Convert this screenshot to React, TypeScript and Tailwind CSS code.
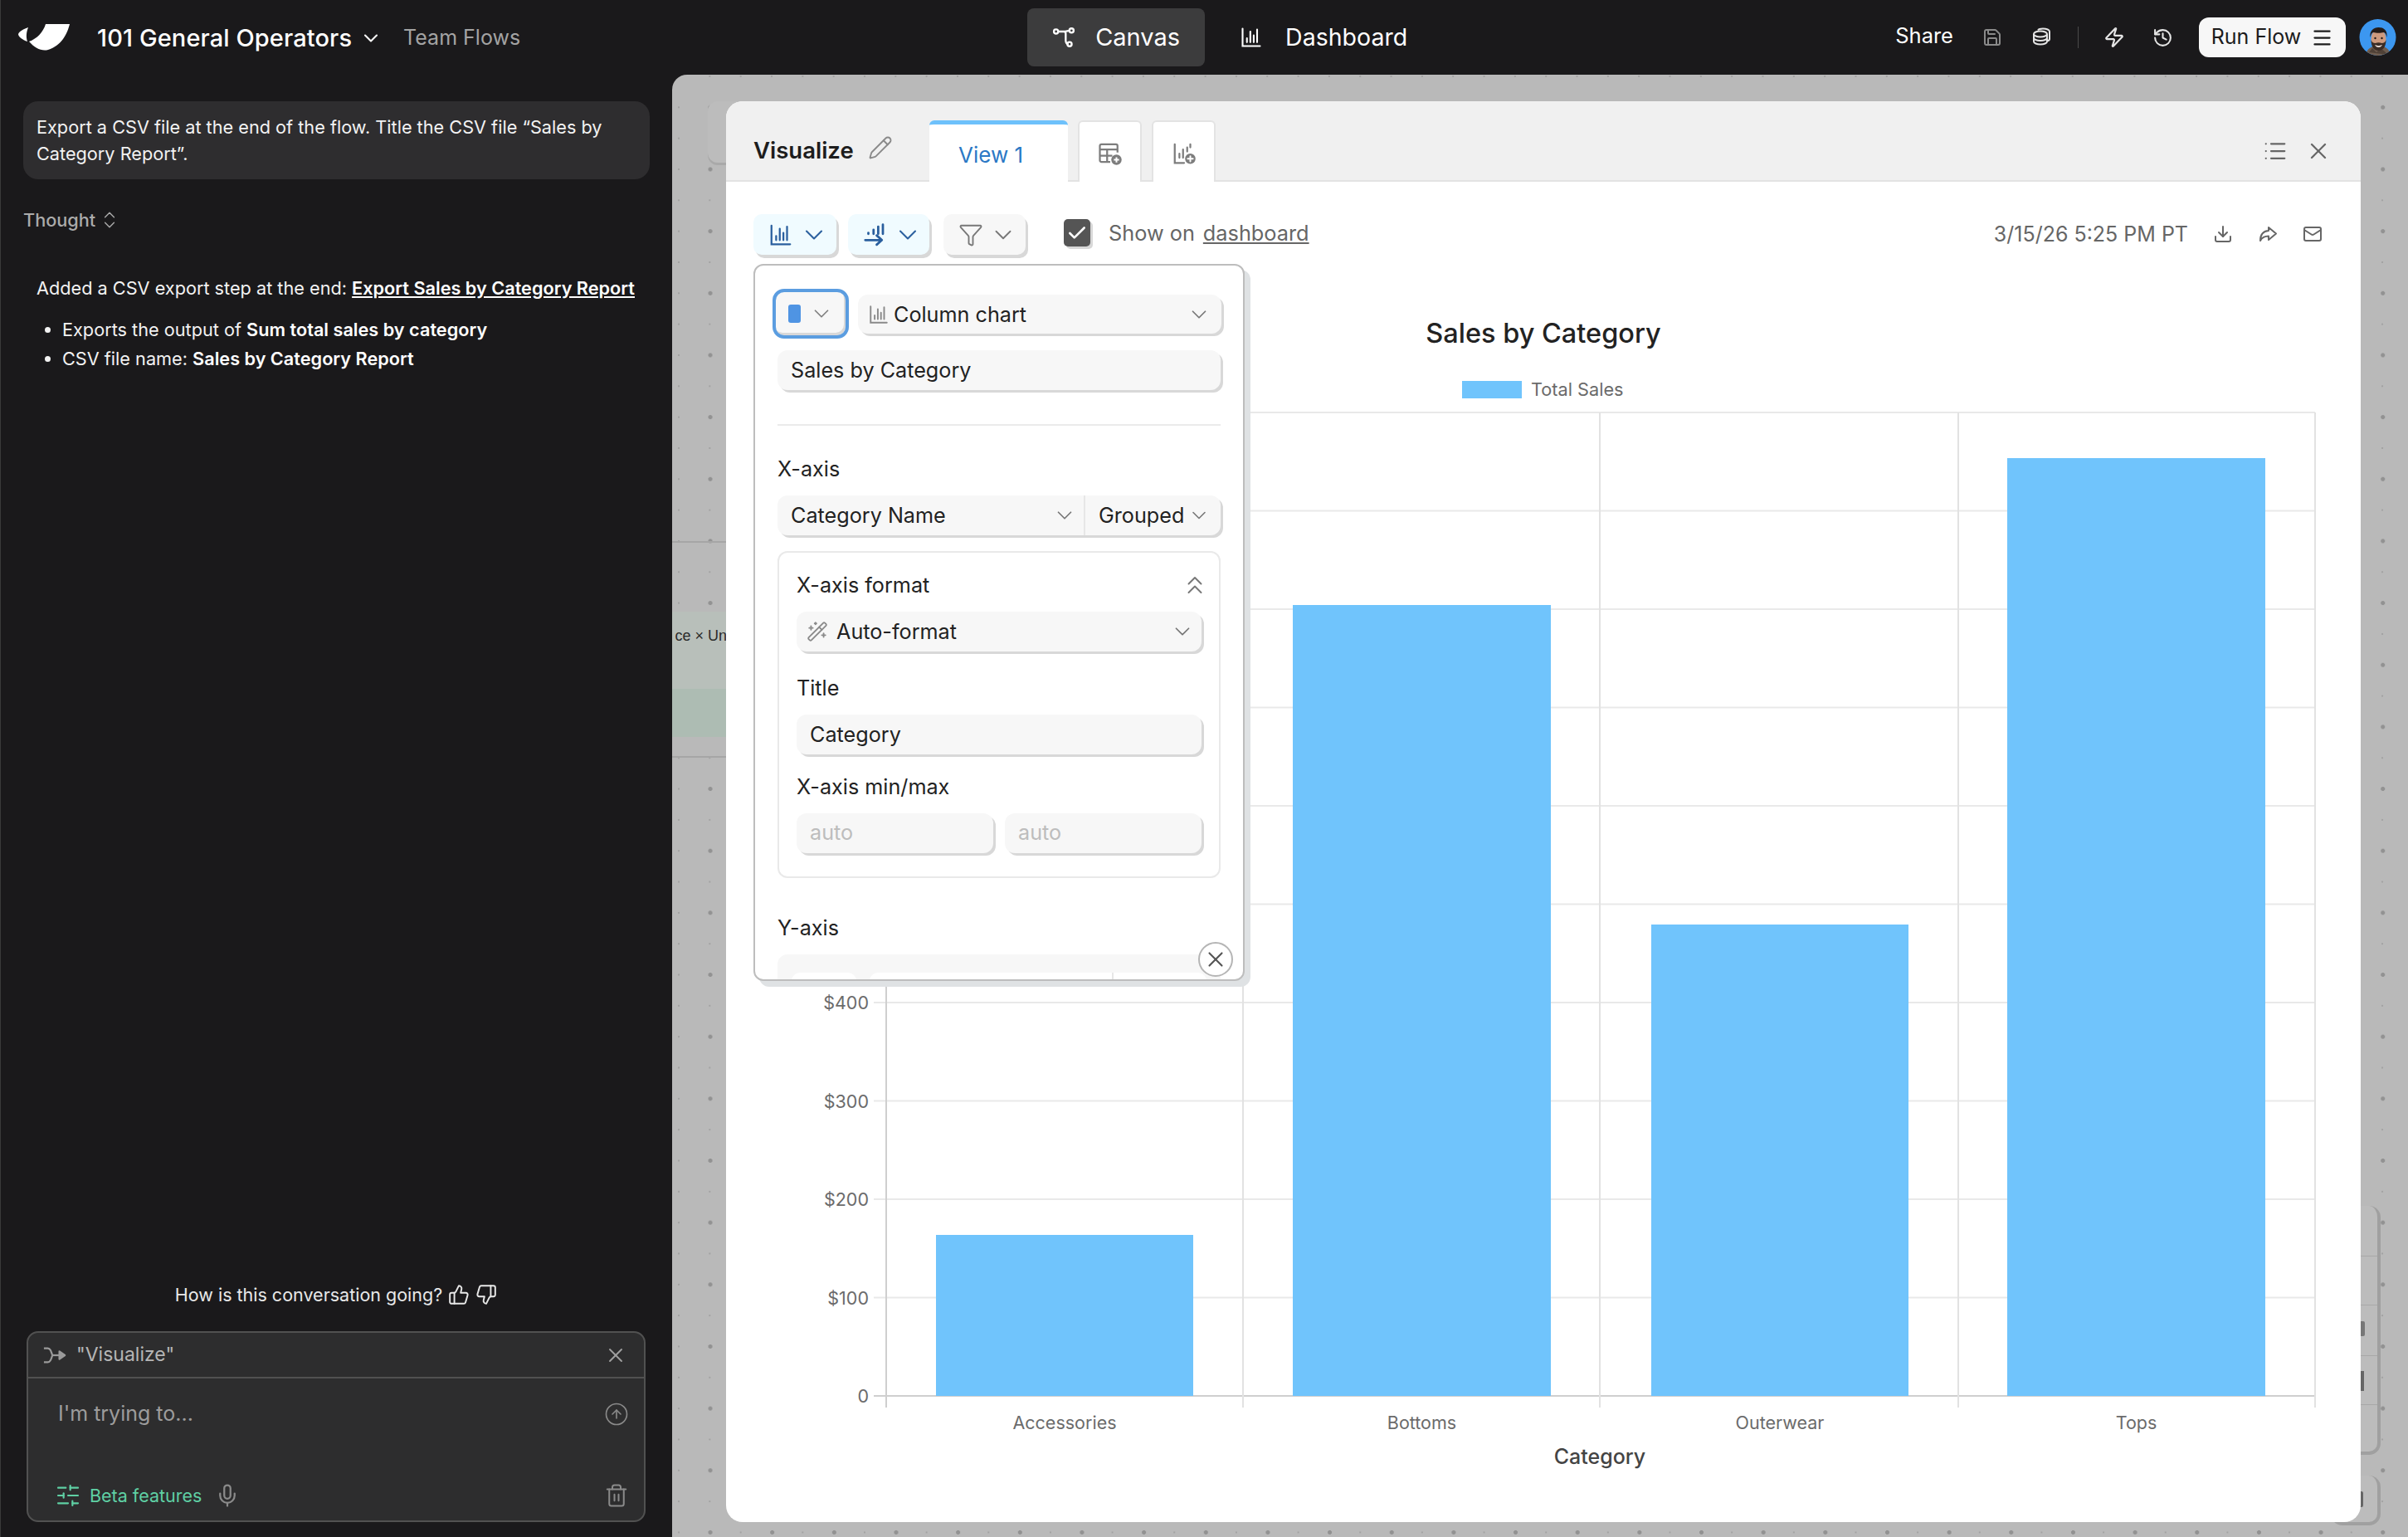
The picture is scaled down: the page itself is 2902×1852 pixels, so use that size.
import React from "react";
import {
  ChevronDown, ChevronsUpDown, ChevronsUp, X, Pencil, List, Save, Zap, History, Menu, Download, Mail, Filter, WandSparkles, ThumbsUp, ThumbsDown, CircleArrowUp, SlidersHorizontal, Mic, Trash2, Check,
} from "lucide-react";

const Bars = ({ className = "" }: { className?: string }) => (
  <svg viewBox="0 0 24 24" fill="none" stroke="currentColor" strokeWidth="1.8" strokeLinecap="round" className={className}>
    <path d="M3 3v18h18" />
    <path d="M7.5 17v-4M11 17V6M14.5 17v-7M18 17V4" />
  </svg>
);

const BarsArrow = ({ className = "" }: { className?: string }) => (
  <svg viewBox="0 0 24 24" fill="none" stroke="currentColor" strokeWidth="2.2" strokeLinecap="round" strokeLinejoin="round" className={className}>
    <path d="M6 11v-1M11 11V7M15.5 11V4M20 11V2" />
    <path d="M3 17h16M14 12.5l5 4.5-5 4.5" />
  </svg>
);

const Nodes = ({ className = "" }: { className?: string }) => (
  <svg viewBox="0 0 24 24" fill="none" stroke="currentColor" strokeWidth="2" strokeLinecap="round" className={className}>
    <circle cx="4" cy="6" r="2.2" />
    <circle cx="20" cy="5" r="2.2" />
    <circle cx="18" cy="19" r="2.2" />
    <path d="M6.2 6H12c2 0 2 1 2 2v7c0 2 1 4 2 4M12 6c3 0 4-1 6-1" />
  </svg>
);

const Stack = ({ className = "" }: { className?: string }) => (
  <svg viewBox="0 0 24 24" fill="none" stroke="currentColor" strokeWidth="2" className={className}>
    <ellipse cx="11" cy="8" rx="8" ry="3.5" />
    <path d="M3 8v9c0 2 3.500 3.500 8 3.500s8-1.500 8-3.500V8" />
    <path d="M3 12.500c0 2 3.500 3.500 8 3.500s8-1.500 8-3.500" />
    <path d="M8 3.500C9 2 11 1.500 14 1.500c4.500 0 8 1.500 8 3.500v9c0 1-1 2-3 2.500" />
  </svg>
);

const Arrow = ({ className = "" }: { className?: string }) => (
  <svg viewBox="0 0 24 24" fill="none" stroke="currentColor" strokeWidth="2" strokeLinejoin="round" className={className}>
    <path d="M13 4l9 7.500-9 7.500v-4.500c-5 0-8 1.500-10 5.500 0-7 3-11.500 10-12z" />
  </svg>
);

const TablePlus = ({ className = "" }: { className?: string }) => (
  <svg viewBox="0 0 24 24" fill="none" stroke="currentColor" strokeWidth="1.8" className={className}>
    <path d="M12 20H3.5A1.5 1.5 0 0 1 2 18.5v-14A1.5 1.5 0 0 1 3.5 3h14A1.5 1.5 0 0 1 19 4.500V11" />
    <path d="M2 8h17M2 14h12M9 8v12" />
    <circle cx="18" cy="18" r="5" fill="currentColor" stroke="none" />
    <path d="M18 15.500v5M15.500 18h5" stroke="#fff" strokeWidth="1.600" />
  </svg>
);

const ChartPlus = ({ className = "" }: { className?: string }) => (
  <svg viewBox="0 0 24 24" fill="none" stroke="currentColor" strokeWidth="1.8" strokeLinecap="round" className={className}>
    <path d="M3 3v18h9" />
    <path d="M7.500 16v-4M11 16V8M15 10V6M18 6V3" />
    <circle cx="18" cy="17" r="5" fill="currentColor" stroke="none" />
    <path d="M18 14.500v5M15.500 17h5" stroke="#fff" strokeWidth="1.600" />
  </svg>
);

const Merge = ({ className = "" }: { className?: string }) => (
  <svg viewBox="0 0 30 24" fill="none" stroke="currentColor" strokeWidth="2.400" strokeLinejoin="round" className={className}>
    <path d="M1 3h5c3 0 4 3 6 9-2 6-3 9-6 9H1" />
    <path d="M12 12h10" />
    <path d="M21 7l7 5-7 5z" fill="currentColor" />
  </svg>
);

const Logo = () => (
  <svg viewBox="0 0 62 32" className="h-[32px] w-[62px]" fill="#fff">
    <path d="M12 4C7 6 2 8 0 12c0 3 5 7 11 9-2-6-1-12 1-17z" />
    <path d="M33 0h29c-3 12-10 26-26 31-8 2-16-2-23-10C22 18 30 10 33 0z" />
  </svg>
);

const Avatar = () => (
  <svg viewBox="0 0 45 44" className="h-[44px] w-[45px]">
    <defs>
      <clipPath id="av"><circle cx="22.500" cy="22" r="22" /></clipPath>
    </defs>
    <g clipPath="url(#av)">
      <rect width="45" height="44" fill="#3c97f0" />
      <path d="M8 44c1-9 8-12 15-12s14 3 15 12z" fill="#6f5d4f" />
      <path d="M12 40l4-5 5 5 5-5 5 4 4 4z" fill="#3a2f28" opacity="0.600" />
      <ellipse cx="23.500" cy="24" rx="9" ry="12" fill="#cd9a7e" />
      <path d="M13.500 22c-1-8 4-12 10-12s11 3 10 12c-1-4-2-6-4-6-3 1-9 1-12 0-2 0-3 2-4 6z" fill="#241c19" />
      <path d="M14.500 25c0 9 4 13 9 13s9-4 9-13c-1 3-3 4-5 4-3-1-5-1-8 0-2 0-4-1-5-4z" fill="#3b2d26" />
      <path d="M19 31c3 1.500 6 1.500 9 0-1 2-2.500 3-4.500 3s-3.500-1-4.500-3z" fill="#f2e6df" />
      <circle cx="19.500" cy="23" r="1.200" fill="#221a17" />
      <circle cx="27.500" cy="23" r="1.200" fill="#221a17" />
    </g>
  </svg>
);

const surface = "bg-[#f7f7f7] rounded-[12px] shadow-[3px_3px_0_#d8d8d8]";
const label = "text-[25.200px] leading-[32px] text-[#222] font-['Inter',sans-serif]";

function App() {
  const ys = [0, 1, 2, 3, 4, 5, 6, 7, 8, 9, 10];
  const ticks = ["0", "$100", "$200", "$300", "$400"];
  const vs = [1498, 1928, 2360, 2790];
  const bars = [
    { x: 1128, w: 310, top: 1488, n: "Accessories" },
    { x: 1558, w: 311, top: 729, n: "Bottoms" },
    { x: 1990, w: 310, top: 1114, n: "Outerwear" },
    { x: 2419, w: 311, top: 552, n: "Tops" },
  ];
  return (
    <div className="flex h-[1852px] w-[2902px] flex-col overflow-hidden bg-[#1a191b] font-['Inter',sans-serif] text-white shadow-[inset_1px_0_0_#3a3a3a]">
      {/* top bar */}
      <header className="flex h-[90px] shrink-0 items-center pl-[22px] pr-[14px]">
        <Logo />
        <span className="ml-[33px] mt-[2px] text-[29px] font-medium tracking-[0.1px]">101 General Operators</span>
        <ChevronDown className="ml-[9px] mt-[2px] h-[28px] w-[28px]" strokeWidth={1.800} />
        <span className="ml-[25px] mt-[2px] text-[25px] text-[#a3a3a3]">Team Flows</span>
        <div className="ml-[611px] flex items-center">
          <div className="flex h-[70px] w-[214px] items-center justify-center gap-[24px] rounded-[8px] bg-[#3c3c3d]">
            <Nodes className="h-[28px] w-[28px]" />
            <span className="text-[29px]">Canvas</span>
          </div>
          <div className="ml-[42px] flex items-center gap-[27px]">
            <Bars className="h-[28px] w-[28px]" />
            <span className="text-[28.500px]">Dashboard</span>
          </div>
        </div>
        <div className="ml-auto flex items-center">
          <span className="mb-[3px] text-[25.500px]">Share</span>
          <Save className="ml-[35px] h-[24px] w-[24px] text-[#8a8a8a]" strokeWidth={2} />
          <Stack className="ml-[35px] h-[24px] w-[24px] text-[#e5e5e5]" />
          <div className="ml-[32px] h-[26px] w-[1px] bg-[#4a4a4a]" />
          <Zap className="ml-[30px] h-[26px] w-[26px] text-[#e5e5e5]" strokeWidth={2} />
          <History className="ml-[33px] h-[25px] w-[25px] text-[#e5e5e5]" strokeWidth={2} />
          <div className="ml-[31px] flex h-[48px] w-[177px] items-center justify-center gap-[12px] rounded-[12px] bg-[#f7f7f7] text-[#1c1c1c]">
            <span className="text-[25px]">Run Flow</span>
            <Menu className="h-[27px] w-[27px]" strokeWidth={2} />
          </div>
          <div className="ml-[16px]"><Avatar /></div>
        </div>
      </header>

      <div className="flex min-h-0 flex-1">
        {/* left chat */}
        <aside className="flex w-[810px] shrink-0 flex-col pb-[18px] pl-[28px] pr-[28px] pt-[32px]">
          <div className="w-[755px] rounded-[18px] bg-[#2e2d2f] py-[15px] pl-[16px] pr-[30px] text-[21.700px] leading-[32px] text-[#f2f2f2]">
            Export a CSV file at the end of the flow. Title the CSV file “Sales by Category Report”.
          </div>
          <div className="mt-[33px] flex items-center gap-[4px] text-[21.700px] font-medium leading-[32px] text-[#ababab]">
            Thought
            <ChevronsUpDown className="h-[26px] w-[26px]" strokeWidth={1.300} />
          </div>
          <div className="mt-[50px] pl-[16px] text-[21.700px] leading-[32px] text-[#f2f2f2]">
            <p>
              Added a CSV export step at the end:{" "}
              <span className="font-semibold text-white underline">Export Sales by Category Report</span>
            </p>
            <ul className="mt-[18px] list-disc pl-[31px]">
              <li className="mb-[3px]">Exports the output of <span className="font-semibold text-white">Sum total sales by category</span></li>
              <li>CSV file name: <span className="font-semibold text-white">Sales by Category Report</span></li>
            </ul>
          </div>
          <div className="mt-auto flex items-center justify-center gap-[7px] text-[21.500px] leading-[32px] text-[#e8e8e8]">
            <span>How is this conversation going?</span>
            <ThumbsUp className="h-[26px] w-[26px]" strokeWidth={1.800} />
            <ThumbsDown className="h-[26px] w-[26px]" strokeWidth={1.800} />
          </div>
          <div className="ml-[4px] mt-[28px] flex h-[230px] w-[746px] flex-col rounded-[14px] border-2 border-[#515151] bg-[#2d2d2e]">
            <div className="flex h-[55px] shrink-0 items-center border-b-2 border-[#515151] pl-[18px] pr-[20px] text-[#b5b5b5]">
              <Merge className="h-[24px] w-[28px] text-[#9a9a9a]" />
              <span className="ml-[12px] text-[23px]">"Visualize"</span>
              <X className="ml-auto h-[28px] w-[28px] text-[#a0a0a0]" strokeWidth={1.600} />
            </div>
            <div className="flex flex-1 flex-col pb-[14px] pl-[36px] pr-[18px] pt-[24px]">
              <div className="flex items-center justify-between">
                <span className="text-[25px] text-[#9c9c9c]">I'm trying to...</span>
                <CircleArrowUp className="h-[30px] w-[30px] text-[#8a8a8a]" strokeWidth={1.300} />
              </div>
              <div className="mt-auto flex items-center">
                <SlidersHorizontal className="ml-[-4px] h-[32px] w-[32px] text-[#5fd0a4]" strokeWidth={1.600} />
                <span className="ml-[10px] text-[21.500px] text-[#5fd0a4]">Beta features</span>
                <Mic className="ml-[16px] h-[30px] w-[30px] text-[#8a8a8a]" strokeWidth={1.800} />
                <Trash2 className="ml-auto h-[30px] w-[30px] text-[#8a8a8a]" strokeWidth={1.600} />
              </div>
            </div>
          </div>
        </aside>

        {/* canvas */}
        <main className="relative min-w-0 flex-1 overflow-hidden rounded-tl-[18px] bg-[#b9b9b9] bg-[image:radial-gradient(circle,#929292_2.200px,transparent_2.800px),radial-gradient(circle,#a2a2a2_1px,transparent_1.500px)] bg-[size:74.670px_74.670px,37.335px_37.335px] bg-[position:8.700px_2px,-10.670px_-16.670px] pb-[18px] pl-[65px] pr-[57px] pt-[32px]">
          {/* dimmed nodes behind the modal */}
          <div className="absolute left-[43px] top-[32px] h-[74px] w-[60px] rounded-[12px] bg-[#bcbcbc] shadow-[0_3px_0_#a9a9a9]" />
          <div className="absolute left-0 top-[562px] h-[2px] w-[70px] bg-[#a6a6a6]" />
          <div className="absolute left-0 top-[647px] flex h-[93px] w-[70px] items-start justify-end overflow-hidden bg-[#b8bfba] pt-[18px] text-[18px] leading-[22px] text-[#2a2a2a] font-['Liberation_Sans',sans-serif]">
            <span className="whitespace-nowrap">ce × Uni</span>
          </div>
          <div className="absolute left-0 top-[740px] h-[58px] w-[70px] bg-[#adbcb3]" />
          <div className="absolute left-0 top-[821px] h-[2px] w-[70px] bg-[#a6a6a6]" />
          <div className="absolute right-[33px] top-[1363px] h-[300px] w-[50px] rounded-r-[14px] border-r-[4px] border-b-[4px] border-[#a0a0a0] bg-[#bcbcbc]">
            <div className="absolute left-0 top-[60px] h-[1px] w-full bg-[#a8a8a8]" />
            <div className="absolute left-0 top-[119px] h-[1px] w-full bg-[#a8a8a8]" />
            <div className="absolute left-0 top-[180px] h-[1px] w-full bg-[#a8a8a8]" />
            <div className="absolute left-0 top-[239px] h-[1px] w-full bg-[#a8a8a8]" />
            <div className="absolute left-[26px] top-[139px] h-[18px] w-[5px] rounded-r-[2px] bg-[#777]" />
            <div className="absolute left-[26px] top-[199px] h-[24px] w-[4px] bg-[#666]" />
          </div>
          <div className="absolute right-[33px] top-[1688px] h-[60px] w-[60px] rounded-[14px] border-b-[4px] border-r-[4px] border-[#a0a0a0] bg-[#bcbcbc]">
            <div className="absolute right-[17px] top-[19px] h-[19px] w-[4px] rounded-r-[2px] bg-[#666]" />
          </div>

          {/* modal */}
          <section className="relative flex h-full flex-col overflow-hidden rounded-[20px] bg-white text-[#1d1d1d]">
            <div className="flex h-[97px] shrink-0 items-end border-b-2 border-[#e3e3e3] bg-[#f0f0f0]">
              <div className="mb-[15px] ml-[33px] flex w-[212px] items-center">
                <span className="text-[27.500px] font-semibold">Visualize</span>
                <Pencil className="mb-[6px] ml-[17px] h-[30px] w-[30px] text-[#8a8a8a]" strokeWidth={1.500} />
              </div>
              <div className="relative z-10 mb-[-2px] flex h-[74px] w-[167px] items-center rounded-t-[6px] border-t-[5px] border-[#6ec1fb] bg-white pl-[35px] pt-[3px] text-[26px] text-[#2b78c5]">
                View 1
              </div>
              <div className="mb-[-2px] ml-[12px] flex h-[74px] w-[77px] items-center justify-center rounded-t-[6px] border-x-2 border-t-2 border-[#e3e3e3] bg-white pt-[3px]">
                <TablePlus className="h-[30px] w-[30px] text-[#7d7d7d]" />
              </div>
              <div className="mb-[-2px] ml-[12px] flex h-[74px] w-[77px] items-center justify-center rounded-t-[6px] border-x-2 border-t-2 border-[#e3e3e3] bg-white pt-[3px]">
                <ChartPlus className="h-[30px] w-[30px] text-[#7d7d7d]" />
              </div>
              <div className="mb-[19px] ml-auto mr-[35px] flex items-center gap-[21px] text-[#666]">
                <List className="h-[30px] w-[30px]" strokeWidth={1.800} />
                <X className="h-[32px] w-[32px]" strokeWidth={1.700} />
              </div>
            </div>

            <div className="flex h-[151px] shrink-0 items-start pl-[33px] pr-[46px] pt-[39px]">
              <div className="flex h-[49px] w-[100px] items-center justify-center gap-[7px] rounded-[10px] bg-[#f0fbff] pl-[8px] text-[#2a5f9e] shadow-[3px_4px_0_#d8d8d8]">
                <Bars className="h-[30px] w-[30px]" />
                <ChevronDown className="h-[36px] w-[36px]" strokeWidth={1.400} />
              </div>
              <div className="ml-[14px] flex h-[49px] w-[98px] items-center justify-center gap-[7px] rounded-[10px] bg-[#f0fbff] pl-[8px] text-[#2a5f9e] shadow-[3px_4px_0_#d8d8d8]">
                <BarsArrow className="h-[30px] w-[30px]" />
                <ChevronDown className="h-[36px] w-[36px]" strokeWidth={1.400} />
              </div>
              <div className="ml-[17px] flex h-[49px] w-[99px] items-center justify-center gap-[7px] rounded-[10px] bg-[#f7f7f7] pl-[8px] text-[#777] shadow-[3px_4px_0_#d8d8d8]">
                <Filter className="h-[30px] w-[30px]" strokeWidth={1.500} />
                <ChevronDown className="h-[34px] w-[34px]" strokeWidth={1.300} />
              </div>
              <div className="ml-[46px] mt-[6px] flex h-[33px] w-[32px] items-center justify-center rounded-[5px] bg-[#555] text-white shadow-[3px_3px_0_#d8d8d8]">
                <Check className="h-[26px] w-[26px]" strokeWidth={2.400} />
              </div>
              <span className="ml-[22px] mt-[6px] text-[25.300px] leading-[33px] text-[#666]">Show on</span>
              <span className="ml-[10px] mt-[6px] text-[25.300px] leading-[33px] text-[#666] underline">dashboard</span>
              <span className="ml-auto mt-[8px] text-[25px] leading-[33px] text-[#666]">3/15/26 5:25 PM PT</span>
              <Download className="ml-[30px] mt-[12px] h-[24px] w-[24px] text-[#666]" strokeWidth={2} />
              <Arrow className="ml-[30px] mt-[12px] h-[24px] w-[24px] text-[#666]" />
              <Mail className="ml-[30px] mt-[12px] h-[24px] w-[24px] text-[#666]" strokeWidth={2} />
            </div>

            <svg viewBox="875 370 1970 1464" className="block w-[1970px] flex-1">
              {ys.map((i) => (
                <line key={i} x1={i < 5 ? 1053 : 1068} x2="2790" y1={1682 - i * 118.5} y2={1682 - i * 118.5} stroke={i === 0 ? "#cfcfcf" : "#e9e9e9"} strokeWidth="2" />
              ))}
              <line x1="1068" x2="1068" y1="497" y2="1696" stroke="#cfcfcf" strokeWidth="2" />
              {vs.map((x) => (
                <line key={x} x1={x} x2={x} y1="497" y2="1696" stroke="#e2e2e2" strokeWidth="2" />
              ))}
              {bars.map((b) => (
                <rect key={b.n} x={b.x} y={b.top} width={b.w} height={1682 - b.top} fill="#70c4fc" />
              ))}
              {ticks.map((t, i) => (
                <text key={t} x="1047" y={1682 - i * 118.5 + 8} textAnchor="end" fontSize="21.500" fill="#6b6b6b">{t}</text>
              ))}
              {bars.map((b) => (
                <text key={b.n} x={b.x + b.w / 2} y="1722" textAnchor="middle" fontSize="21.500" fill="#6b6b6b">{b.n}</text>
              ))}
              <text x="1928" y="1764" textAnchor="middle" fontSize="25" fontWeight="500" fill="#444">Category</text>
              <text x="1860" y="413" textAnchor="middle" fontSize="32.500" fontWeight="500" fill="#222">Sales by Category</text>
              <rect x="1762" y="459" width="72" height="21" fill="#70c4fc" />
              <text x="1845" y="477" fontSize="21.700" fill="#6b6b6b">Total Sales</text>
            </svg>

            {/* config popover */}
            <div className="absolute left-[33px] top-[196px] h-[864px] w-[592px] overflow-hidden rounded-[12px] border-2 border-[#bdbdbd] bg-white shadow-[7px_7px_0_#dfe2e4]">
              <div className="flex items-center pl-[21px] pr-[26px] pt-[28px]">
                <div className="flex h-[60px] w-[92px] items-center justify-center gap-[10px] rounded-[14px] border-[4px] border-[#5b9de0] bg-[#f7f7f7] shadow-[inset_-2px_-3px_0_#d8d8d8]">
                  <div className="h-[22px] w-[15px] rounded-[3px] bg-[#4f94e3]" />
                  <ChevronDown className="h-[30px] w-[30px] text-[#808080]" strokeWidth={1.400} />
                </div>
                <div className={`${surface} ml-[11px] mt-[1px] flex h-[47px] flex-1 items-center pl-[12px] pr-[12px]`}>
                  <Bars className="h-[26px] w-[26px] text-[#8a8a8a]" />
                  <span className={`${label} ml-[5px]`}>Column chart</span>
                  <ChevronDown className="ml-auto h-[30px] w-[30px] text-[#777]" strokeWidth={1.400} />
                </div>
              </div>
              <div className="px-[27px] pt-[14px]">
                <div className={`${surface} flex h-[48px] items-center px-[16px]`}>
                  <span className={label}>Sales by Category</span>
                </div>
                <div className="mt-[41px] h-[2px] bg-[#ebebeb]" />
                <div className={`${label} mt-[36px]`}>X-axis</div>
                <div className={`${surface} mt-[16px] flex h-[48px] items-center`}>
                  <div className="flex h-full w-[371px] items-center border-r-2 border-[#e7e7e7] pl-[16px] pr-[8px]">
                    <span className={label}>Category Name</span>
                    <ChevronDown className="ml-auto h-[30px] w-[30px] text-[#777]" strokeWidth={1.400} />
                  </div>
                  <div className="flex h-full flex-1 items-center pl-[16px] pr-[12px]">
                    <span className={label}>Grouped</span>
                    <ChevronDown className="ml-auto h-[28px] w-[28px] text-[#777]" strokeWidth={1.400} />
                  </div>
                </div>
                <div className="mt-[19px] rounded-[12px] border-2 border-[#e9e9e9] px-[21px] pb-[28px] pt-[21px]">
                  <div className="flex items-center justify-between">
                    <span className={label}>X-axis format</span>
                    <ChevronsUp className="mr-[-10px] h-[36px] w-[36px] text-[#777]" strokeWidth={1.300} />
                  </div>
                  <div className={`${surface} mt-[14px] flex h-[48px] items-center pl-[12px] pr-[8px]`}>
                    <WandSparkles className="h-[26px] w-[26px] text-[#8a8a8a]" strokeWidth={1.700} />
                    <span className={`${label} ml-[10px]`}>Auto-format</span>
                    <ChevronDown className="ml-auto h-[30px] w-[30px] text-[#777]" strokeWidth={1.400} />
                  </div>
                  <div className={`${label} mt-[28px]`}>Title</div>
                  <div className={`${surface} mt-[16px] flex h-[48px] items-center px-[16px]`}>
                    <span className={label}>Category</span>
                  </div>
                  <div className={`${label} mt-[23px]`}>X-axis min/max</div>
                  <div className="mt-[16px] flex gap-[14px]">
                    <div className={`${surface} flex h-[48px] flex-1 items-center px-[16px]`}>
                      <span className="text-[25.200px] text-[#bdbdbd]">auto</span>
                    </div>
                    <div className={`${surface} flex h-[48px] flex-1 items-center px-[16px]`}>
                      <span className="text-[25.200px] text-[#bdbdbd]">auto</span>
                    </div>
                  </div>
                </div>
                <div className={`${label} mt-[44px]`}>Y-axis</div>
                <div className="mt-[16px] h-[80px] rounded-[12px] bg-[#f7f7f7] px-[17px] pt-[22px]">
                  <div className="flex gap-[16px]">
                    <div className="h-[40px] w-[78px] rounded-[10px] bg-white" />
                    <div className="flex h-[40px] flex-1 rounded-[10px] bg-white">
                      <div className="w-[294px] border-r-2 border-[#e7e7e7]" />
                    </div>
                  </div>
                </div>
              </div>
            </div>
            <div className="absolute left-[569px] top-[1013px] flex h-[42px] w-[42px] items-center justify-center rounded-full border-2 border-[#b5b5b5] bg-white text-[#555]">
              <X className="h-[30px] w-[30px]" strokeWidth={1.700} />
            </div>
          </section>
        </main>
      </div>
    </div>
  );
}

export default App;
